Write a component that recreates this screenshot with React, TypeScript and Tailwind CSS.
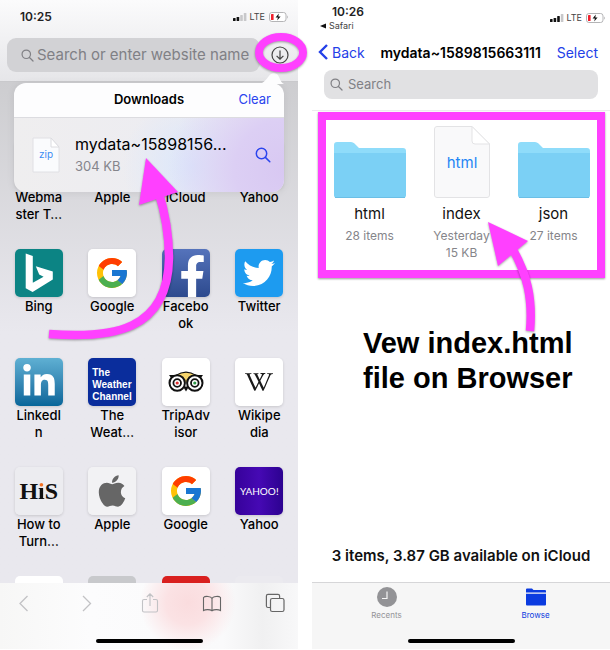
import React from 'react'
import { FaApple, FaFacebookF, FaLinkedinIn, FaTwitter } from 'react-icons/fa'
import { FcGoogle } from 'react-icons/fc'
import { SiWikipedia } from 'react-icons/si'

interface Site {
  lines: string[]
  tile: React.ReactNode
}

function SearchIcon({ className }: { className: string }) {
  return (
    <svg viewBox="0 0 16 16" fill="none" stroke="currentColor" strokeWidth="1.5" strokeLinecap="round" className={className} aria-hidden="true">
      <circle cx="6.5" cy="6.5" r="5.2" />
      <path d="M10.4 10.4 14.8 14.8" />
    </svg>
  )
}

function StatusIcons({ bars }: { bars: number }) {
  return (
    <div className="flex items-center gap-[3px] text-[#444]">
      <svg viewBox="0 0 14 10" className="h-[10px] w-[14px]" aria-hidden="true">
        {[3, 4, 6, 8].map((h, i) => (
          <rect key={h} x={i * 3.6} y={9 - h} width="2.6" height={h} rx="0.6" fill={i < bars ? '#111' : '#c8c8ca'} />
        ))}
      </svg>
      <span className="text-[9px] leading-3">LTE</span>
      <svg viewBox="0 0 20 10" className="ml-px h-[10px] w-[20px]" aria-hidden="true">
        <rect x="0.5" y="0.5" width="16.5" height="9" rx="2.4" fill="#fff" stroke="#b4b4b6" />
        <rect x="2" y="2" width="2.6" height="6" rx="0.6" fill="#f0202c" />
        <path d="M9.8 1.6 6.6 5.6H8.9L8.2 8.6 11.6 4.5H9.3Z" fill="#111" />
        <path d="M18.2 3.4a2 2 0 0 1 0 3.2Z" fill="#b4b4b6" />
      </svg>
    </div>
  )
}

function BingTile() {
  return (
    <div className="h-full w-full bg-[#0c8484]">
      <svg viewBox="0 0 48 48" fill="#fff" className="h-12 w-12" aria-hidden="true">
        <path d="M10.7 4.5 17.8 7V33.8L28.6 27.8 24.2 25.6 20.8 17.3 37.8 22.6V30.6L17.6 43 10.7 39.3Z" />
      </svg>
    </div>
  )
}

function GoogleTile() {
  return (
    <div className="flex h-full w-full items-center justify-center bg-white">
      <FcGoogle className="h-9 w-9" />
    </div>
  )
}

function OwlTile() {
  return (
    <div className="flex h-full w-full items-center justify-center bg-white">
      <svg viewBox="0 0 48 48" className="h-12 w-12" aria-hidden="true">
        <path d="M7 17H13.5Q24 10 34.5 17H41L38.5 20.5H9.5Z" fill="#111" />
        <path d="M14.5 17.5Q24 12 33.5 17.5L24 24.5Z" fill="#f6d56c" />
        <path d="M21 28.5 24 33.5 27 28.5Z" fill="#111" />
        {[
          { cx: 15.2, pupil: '#e03030' },
          { cx: 32.8, pupil: '#2f9a48' },
        ].map(({ cx, pupil }) => (
          <g key={cx}>
            <circle cx={cx} cy="25" r="7.7" fill="#fff" stroke="#111" strokeWidth="2" />
            <circle cx={cx} cy="25" r="3.8" fill="#fff" stroke="#111" strokeWidth="1.8" />
            <circle cx={cx} cy="25" r="1.6" fill={pupil} />
          </g>
        ))}
      </svg>
    </div>
  )
}

const sites: Site[] = [
  { lines: ['Webma', 'ster T…'], tile: null },
  { lines: ['Apple'], tile: null },
  { lines: ['iCloud'], tile: null },
  { lines: ['Yahoo'], tile: null },
  { lines: ['Bing'], tile: <BingTile /> },
  { lines: ['Google'], tile: <GoogleTile /> },
  {
    lines: ['Facebo', 'ok'],
    tile: (
      <div className="flex h-full w-full items-end justify-end bg-gradient-to-b from-[#5573bb] to-[#2d4a8e] pr-1">
        <FaFacebookF className="h-[42px] w-[27px] text-white" />
      </div>
    ),
  },
  {
    lines: ['Twitter'],
    tile: (
      <div className="flex h-full w-full items-center justify-center bg-[#1d9bf0]">
        <FaTwitter className="h-8 w-8 text-white" />
      </div>
    ),
  },
  {
    lines: ['LinkedI', 'n'],
    tile: (
      <div className="flex h-full w-full items-center justify-center bg-gradient-to-b from-[#5fb0d3] to-[#06669a]">
        <FaLinkedinIn className="h-9 w-9 text-white" />
      </div>
    ),
  },
  {
    lines: ['The', 'Weat…'],
    tile: (
      <div className="flex h-full w-full flex-col justify-end bg-[#0a2d9c] pb-[3px] pl-1 font-['Liberation_Sans',sans-serif] text-[10px] leading-3 font-bold text-white">
        <span>The</span>
        <span>Weather</span>
        <span>Channel</span>
      </div>
    ),
  },
  { lines: ['TripAdv', 'isor'], tile: <OwlTile /> },
  {
    lines: ['Wikipe', 'dia'],
    tile: (
      <div className="flex h-full w-full items-center justify-center bg-white">
        <SiWikipedia className="h-7 w-7 text-[#1a1a1a]" />
      </div>
    ),
  },
  {
    lines: ['How to', 'Turn…'],
    tile: (
      <div className="flex h-full w-full items-center justify-center bg-[#ececf0] font-['Liberation_Serif',serif] text-[24px] font-bold text-[#111]">
        H<span className="bg-gradient-to-b from-[#f37021] from-[38%] to-[#111] to-[38%] bg-clip-text text-transparent">i</span>S
      </div>
    ),
  },
  {
    lines: ['Apple'],
    tile: (
      <div className="flex h-full w-full items-center justify-center bg-[#f2f2f4]">
        <FaApple className="h-9 w-9 text-[#666]" />
      </div>
    ),
  },
  { lines: ['Google'], tile: <GoogleTile /> },
  {
    lines: ['Yahoo'],
    tile: (
      <div className="flex h-full w-full items-center justify-center bg-gradient-to-r from-[#36029a] via-[#4609b4] to-[#2c0290] font-[Lato,sans-serif] text-[10px] text-white">
        YAHOO!
      </div>
    ),
  },
]

function Favorite({ lines, tile }: Site) {
  return (
    <a href="#" className="flex h-[109px] flex-col items-center text-black">
      <span className="mb-px block h-12 w-12 overflow-hidden rounded-[5px] shadow-[0_1px_3px_rgba(0,0,0,0.15)]">{tile}</span>
      {lines.map((line) => (
        <span key={line} className="text-[13px] leading-[17px] font-medium whitespace-nowrap">
          {line}
        </span>
      ))}
    </a>
  )
}

function DownloadsPopover() {
  return (
    <div className="absolute top-[83px] right-[14px] left-[14px]">
      <svg viewBox="0 0 28 12" className="absolute -top-[11px] right-0 h-3 w-7" fill="#fdfdfe" aria-hidden="true">
        <path d="M3 12C11 11 12 1 18 1S23 10 28 12Z" />
      </svg>
      <div className="overflow-hidden rounded-xl shadow-[0_1px_8px_rgba(0,0,0,0.08)]">
        <div className="grid h-[35px] grid-cols-3 items-center border-b border-[#dcdce0] bg-[#fdfdfe] px-[13px]">
          <h2 className="col-start-2 text-center text-[13px] font-semibold">Downloads</h2>
          <button className="justify-self-end text-[13px] text-[#2b45ee]">Clear</button>
        </div>
        <div className="flex h-[74px] items-center bg-[radial-gradient(circle_at_100%_70%,#d8c8f2_0%,#dccff4_18%,transparent_42%),radial-gradient(circle_at_66%_65%,#dbe7fb_0%,transparent_38%),linear-gradient(90deg,#efeeef,#ebebf3)] pr-[13px] pl-[18px]">
          <svg viewBox="0 0 28 36" className="h-9 w-7 shrink-0" aria-hidden="true">
            <path d="M1 1H19L27 10V35H1Z" fill="#fafbfd" stroke="#e0e0e4" />
            <path d="M19 1V10H27Z" fill="#fff" stroke="#dcdce0" strokeLinejoin="round" />
            <text x="14" y="21" textAnchor="middle" fontSize="10" fill="#3b8cf4">
              zip
            </text>
          </svg>
          <div className="ml-[15px] flex-1">
            <p className="text-[16px] leading-[22px]">mydata~15898156...</p>
            <p className="text-[13px] leading-[22px] text-[#85858c]">304 KB</p>
          </div>
          <button aria-label="Show in Files" className="text-[#2b45ee]">
            <SearchIcon className="h-4 w-4" />
          </button>
        </div>
      </div>
    </div>
  )
}

function SafariScreen() {
  return (
    <section className="relative min-w-0 flex-1">
      <header className="h-[82px] border-b border-[#c9c9cc] bg-gradient-to-b from-[#fbfbfc] to-[#e6e6e9]">
        <div className="flex h-[38px] items-center justify-between pr-[9px] pb-1 pl-[20px]">
          <span className="text-[12px] font-semibold text-[#222]">10:25</span>
          <StatusIcons bars={2} />
        </div>
        <div className="flex items-center pr-[9px] pl-[7px]">
          <label className="flex h-[34px] min-w-0 flex-1 items-center gap-[3px] rounded-[9px] bg-[#d2d2d5] pl-[14px] text-[#808085]">
            <SearchIcon className="h-[13px] w-[13px] shrink-0" />
            <input
              type="text"
              aria-label="Address"
              placeholder="Search or enter website name"
              className="min-w-0 flex-1 bg-transparent text-[15px] placeholder-[#808085] outline-none"
            />
          </label>
          <button aria-label="Downloads" className="ml-[11px] text-[#444]">
            <svg viewBox="0 0 18 18" className="h-[18px] w-[18px]" fill="none" stroke="currentColor" strokeWidth="1.2">
              <circle cx="9" cy="9" r="8" />
              <path d="M9 4.5V13M5.6 9.8 9 13.2 12.4 9.8" />
            </svg>
          </button>
        </div>
      </header>

      <main className="bg-gradient-to-b from-[#cdcdd0] to-[#e9e8ee] to-50% px-[2px] pt-[58px]">
        <div className="grid grid-cols-4">
          {sites.map((site, i) => (
            <Favorite key={i} {...site} />
          ))}
        </div>
        {/* Next row, cut off by the toolbar */}
        <div className="grid grid-cols-4 justify-items-center">
          <span className="h-[7px] w-12 rounded-t-[5px] bg-white" />
          <span className="h-[7px] w-12 rounded-t-[5px] bg-[#c8c9cc]" />
          <span className="h-[7px] w-12 rounded-t-[5px] bg-[#d9201f]" />
          <span className="h-[7px] w-12 rounded-t-[5px] bg-[#ebeaef]" />
        </div>
      </main>

      <footer className="h-[66px] bg-[radial-gradient(circle_48px_at_63%_30%,#fadcde_0%,#fbe2e4_45%,transparent_100%),linear-gradient(90deg,#f7f7f6,#fcfcfd_30%,#fafafb_75%,#f0f0f1_88%,#f8f8f9)] pt-[8px]">
        <nav className="flex items-center justify-between pr-[11px] pl-3 text-[#c2c2c5]">
          <button aria-label="Back">
            <svg viewBox="0 0 24 24" className="h-6 w-6" fill="none" stroke="currentColor" strokeWidth="1.3">
              <path d="M15.5 5 8 12.5 15.5 20" />
            </svg>
          </button>
          <button aria-label="Forward">
            <svg viewBox="0 0 24 24" className="h-6 w-6" fill="none" stroke="currentColor" strokeWidth="1.3">
              <path d="M8 5 15.5 12.5 8 20" />
            </svg>
          </button>
          <button aria-label="Share">
            <svg viewBox="0 0 24 24" className="h-6 w-6" fill="none" stroke="currentColor" strokeWidth="1.1">
              <path d="M9 8.5H6A1.5 1.5 0 0 0 4.5 10V19.5A1.5 1.5 0 0 0 6 21H18A1.5 1.5 0 0 0 19.5 19.5V10A1.5 1.5 0 0 0 18 8.5H15M12 15V3M8.8 6 12 2.8 15.2 6" />
            </svg>
          </button>
          <button aria-label="Bookmarks" className="text-[#666]">
            <svg viewBox="0 0 24 24" className="h-6 w-6" fill="none" stroke="currentColor" strokeWidth="1.1">
              <path d="M12 7.5C11 5 5 4.8 3.5 6.5V19.5C5.5 18.3 10 18.3 12 19.8C14 18.3 18.5 18.3 20.5 19.5V6.5C19 4.8 13 5 12 7.5ZM12 7.5V19.8" />
            </svg>
          </button>
          <button aria-label="Tabs" className="text-[#666]">
            <svg viewBox="0 0 24 24" className="h-6 w-6" fill="none" stroke="currentColor" strokeWidth="1.2">
              <rect x="7.5" y="7.5" width="13.5" height="13" rx="1.8" />
              <path d="M7.5 16.5H5A1.6 1.6 0 0 1 3.4 15V5A1.6 1.6 0 0 1 5 3.4H15A1.6 1.6 0 0 1 16.6 5V7.5" />
            </svg>
          </button>
        </nav>
        <div className="mx-auto mt-[24px] h-1 w-[107px] rounded-full bg-black" />
      </footer>

      <DownloadsPopover />

      {/* Callouts */}
      <svg viewBox="0 0 310 350" className="pointer-events-none absolute top-0 left-0 h-[350px] w-[310px] drop-shadow-[0_1px_1px_rgba(0,0,0,0.35)]" aria-hidden="true">
        <ellipse cx="281" cy="52.5" rx="22" ry="15.5" fill="none" stroke="#ff40ff" strokeWidth="8" />
        <path d="M49 334C112 339 168 331 169 258C169 236 165 212 158 190" fill="none" stroke="#ff40ff" strokeWidth="8.5" />
        <path d="M146 158 178 192 139 205Z" fill="#ff40ff" />
      </svg>
    </section>
  )
}

function FolderIcon() {
  return (
    <svg viewBox="0 0 72 56" className="h-14 w-[72px]" aria-hidden="true">
      <path d="M0 3Q0 0 3 0H17Q19 0 20.5 1.5L25 6H69Q72 6 72 9V30H0Z" fill="#8fdcfa" />
      <path d="M0 11H72V53Q72 56 69 56H3Q0 56 0 53Z" fill="#7bd0f5" />
      <path d="M1 55.5H71" stroke="#6bbfe6" />
    </svg>
  )
}

function FileItem({ name, details, icon }: { name: string; details: string[]; icon: React.ReactNode }) {
  return (
    <a href="#" className="flex flex-col items-center">
      <span className="flex h-[72px] items-end">{icon}</span>
      <span className="mt-[6px] text-[15px] leading-5 text-[#111]">{name}</span>
      <span className="mt-[3px] flex flex-col items-center text-[12px] leading-[17px] text-[#85858a]">
        {details.map((detail) => (
          <span key={detail}>{detail}</span>
        ))}
      </span>
    </a>
  )
}

function FilesScreen() {
  return (
    <section className="relative flex min-w-0 flex-1 flex-col">
      <header className="h-[111px] border-b border-[#ececee]">
        <div className="flex h-[38px] items-start justify-between pr-[4px] pl-[8px]">
          <div className="pt-1">
            <p className="pl-[12px] text-[12px] leading-4 font-semibold text-[#222]">10:26</p>
            <a href="#" className="flex items-center gap-[3px] text-[9px] leading-3 text-[#444]">
              <svg viewBox="0 0 6 6" className="h-[6px] w-[6px]" fill="#111" aria-hidden="true">
                <path d="M6 0.5V5.5L0 3Z" />
              </svg>
              Safari
            </a>
          </div>
          <div className="pt-[12px]">
            <StatusIcons bars={3} />
          </div>
        </div>
        <div className="flex h-[28px] items-center justify-between pr-[12px] pl-[6px] text-[14px]">
          <button className="flex items-center gap-1 text-[#2340e8]">
            <svg viewBox="0 0 10 16" className="h-4 w-[10px]" fill="none" stroke="currentColor" strokeWidth="2.4">
              <path d="M9 1 2 8 9 15" />
            </svg>
            Back
          </button>
          <h1 className="font-semibold">mydata~1589815663111</h1>
          <button className="text-[#2340e8]">Select</button>
        </div>
        <label className="mt-1 mr-[12px] ml-[12px] flex h-[29px] items-center gap-[5px] rounded-lg bg-[#e1e1e3] pl-[6px] text-[#808085]">
          <SearchIcon className="h-[13px] w-[13px] shrink-0" />
          <input type="text" aria-label="Search" placeholder="Search" className="min-w-0 flex-1 bg-transparent text-[13px] placeholder-[#808085] outline-none" />
        </label>
      </header>

      <main className="flex flex-1 flex-col">
        <div className="mt-px mr-[5px] ml-[6px] flex h-[166px] justify-center gap-[19px] border-8 border-[#ff40ff] pt-[6px] shadow-[0_1px_2px_rgba(0,0,0,0.4)]">
          <div className="w-[72px]">
            <FileItem name="html" details={['28 items']} icon={<FolderIcon />} />
          </div>
          <div className="w-[74px]">
            <FileItem
              name="index"
              details={['Yesterday', '15 KB']}
              icon={
                <svg viewBox="0 0 56 72" className="h-[72px] w-14" aria-hidden="true">
                  <path d="M3 0.5H38L55.5 18V69Q55.5 71.5 53 71.5H3Q0.5 71.5 0.5 69V3Q0.5 0.5 3 0.5Z" fill="#f9f9fa" stroke="#e3e3e5" />
                  <path d="M38 0.5V15Q38 18 41 18H55.5Z" fill="#fff" stroke="#e3e3e5" />
                  <text x="28" y="42" textAnchor="middle" fontSize="15" fill="#1f86f5">
                    html
                  </text>
                </svg>
              }
            />
          </div>
          <div className="w-[72px]">
            <FileItem name="json" details={['27 items']} icon={<FolderIcon />} />
          </div>
        </div>

        <p className="mt-[48px] ml-[51px] font-['Liberation_Sans',sans-serif] text-[29px] leading-[35px] font-bold whitespace-nowrap">
          Vew index.html
          <br />
          file on Browser
        </p>

        <p className="mt-auto pb-[16px] text-center text-[15px] leading-5 font-semibold text-[#111]">3 items, 3.87 GB available on iCloud</p>
      </main>

      <footer className="h-[67px] border-t border-[#d6d6d8] bg-[#f6f6f6] pt-[4px]">
        <nav className="grid grid-cols-2 text-[8px] leading-[10px]">
          <button className="flex flex-col items-center gap-[3px] text-[#939396]">
            <svg viewBox="0 0 20 20" className="h-5 w-5" aria-hidden="true">
              <circle cx="10" cy="10" r="10" fill="currentColor" />
              <path d="M10 4.5V11.5H5" fill="none" stroke="#f6f6f6" strokeWidth="1.2" />
            </svg>
            Recents
          </button>
          <button className="flex flex-col items-center gap-[3px] text-[#0b3be0]">
            <svg viewBox="0 0 20 20" className="h-5 w-5" fill="currentColor" aria-hidden="true">
              <path d="M0 5.5V2.5Q0 1.5 1 1.5H6L7.5 3H19Q20 3 20 4V5.5Z" />
              <path d="M0 6.8H20V17.5Q20 18.5 19 18.5H1Q0 18.5 0 17.5Z" />
            </svg>
            Browse
          </button>
        </nav>
        <div className="mx-auto mt-[19px] h-1 w-[107px] rounded-full bg-black" />
      </footer>

      {/* Callout */}
      <svg viewBox="0 0 298 350" className="pointer-events-none absolute top-0 left-0 h-[350px] w-[298px] drop-shadow-[0_1px_1px_rgba(0,0,0,0.35)]" aria-hidden="true">
        <path d="M218 331C221 298 215 274 200 248" fill="none" stroke="#ff40ff" strokeWidth="8.5" />
        <path d="M176 222 216 241 186 266Z" fill="#ff40ff" />
      </svg>
    </section>
  )
}

export default function App() {
  return (
    <div className="flex gap-[14px] bg-white font-[Inter,sans-serif] text-black">
      <SafariScreen />
      <FilesScreen />
    </div>
  )
}
